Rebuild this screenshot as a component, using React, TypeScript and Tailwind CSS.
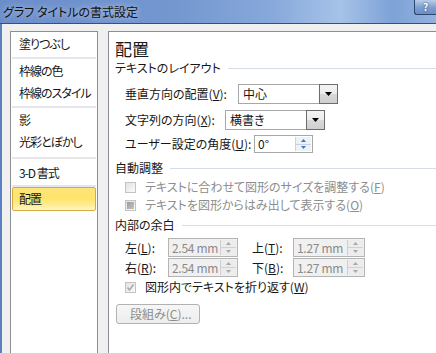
import React from "react";

const jp = "font-['Noto_Sans_CJK_JP','Noto_Sans_CJK_SC',sans-serif] [font-feature-settings:'palt']";

function U({ children }: { children: React.ReactNode }) {
  return <span className="underline decoration-1 underline-offset-[1px]">{children}</span>;
}

function Section({ title, className }: { title: string; className: string }) {
  return (
    <div className={`flex h-4 items-center ${className}`}>
      <span className="whitespace-nowrap leading-4">{title}</span>
      <div className="ml-[7px] h-px flex-1 bg-[#d6dde6]" />
    </div>
  );
}

function Arrow() {
  return (
    <svg width="7" height="4" viewBox="0 0 7 4">
      <polygon points="0,0 7,0 3.5,4" fill="#000" />
    </svg>
  );
}

function Combo({ value }: { value: string }) {
  return (
    <div className="flex h-5 w-[100px] border border-[#a7a7a7] bg-white">
      <div className="flex-1 pl-[4px] leading-[18px]">{value}</div>
      <div className="-my-px -mr-px flex h-5 w-[19px] items-center justify-center border border-[#6c6c6c] bg-[linear-gradient(#f4f4f4_0%,#ebebeb_50%,#d9d9d9_51%,#cfcfcf_100%)]">
        <Arrow />
      </div>
    </div>
  );
}

function SpinArrows({ disabled }: { disabled?: boolean }) {
  const fill = disabled ? "#a8a8a8" : "#3f78c2";
  return (
    <div
      className={`flex w-4 flex-col border-l ${
        disabled ? "border-[#cfcfcf] bg-[#ececec]" : "border-[#c9d4e2] bg-[#eef2f7]"
      }`}
    >
      <div className={`flex flex-1 items-center justify-center border-b ${disabled ? "border-[#d2d2d2]" : "border-[#c7d3e3]"}`}>
        <svg width="5" height="3" viewBox="0 0 5 3">
          <polygon points="0,3 5,3 2.5,0" fill={fill} />
        </svg>
      </div>
      <div className="flex flex-1 items-center justify-center">
        <svg width="5" height="3" viewBox="0 0 5 3">
          <polygon points="0,0 5,0 2.5,3" fill={fill} />
        </svg>
      </div>
    </div>
  );
}

function DisabledSpin({ value, className }: { value: string; className: string }) {
  return (
    <div className={`flex h-[19px] border border-[#b4b4b4] bg-[#f0f0f0] text-[#8a8a8a] ${className}`}>
      <div className="flex-1 pl-[3px] leading-[17px] tracking-[-0.3px] whitespace-nowrap">{value}</div>
      <div className="flex py-px pr-px">
        <SpinArrows disabled />
      </div>
    </div>
  );
}

function Check({ state }: { state: "none" | "fill" | "check" }) {
  return (
    <div className="flex h-[11px] w-[11px] items-center justify-center border border-[#c3c3c3] bg-[linear-gradient(135deg,#e2e2e2,#fbfbfb)]">
      {state === "fill" && <div className="h-[7px] w-[7px] bg-[linear-gradient(135deg,#9c9c9c,#c4c4c4)]" />}
      {state === "check" && (
        <svg width="9" height="9" viewBox="0 0 9 9">
          <path d="M1.5 4.5 L3.5 7 L7.5 1.5" stroke="#a9a9a9" strokeWidth="1.6" fill="none" />
        </svg>
      )}
    </div>
  );
}

function ListItem({ label, className }: { label: string; className?: string }) {
  return <div className={`flex h-[22px] items-center pl-[8px] whitespace-nowrap ${className ?? ""}`}>{label}</div>;
}

function Sep({ className }: { className: string }) {
  return (
    <div className={`flex flex-col justify-center ${className}`}>
      <div className="mx-px h-[2px] bg-[#e6e6ea]" />
    </div>
  );
}

export default function App() {
  return (
    <div className={`flex h-[353px] w-[436px] flex-col overflow-hidden bg-[#f0f0f0] text-[12px] text-[#161616] ${jp}`}>
      {/* title bar */}
      <div className="flex h-[24px] shrink-0 items-start justify-between border-b border-[#34507c] bg-[linear-gradient(90deg,#6b8ecb_0%,#7497d0_40%,#86a8da_62%,#a6c2e8_78%,#7ea2d7_90%,#92b2df_100%)]">
        <div className="pl-[3px] pt-[4px] leading-[15px] text-[#111] [text-shadow:0_0_6px_rgba(255,255,255,0.7)] whitespace-nowrap">
          グラフ タイトルの書式設定
        </div>
        <div className="flex h-[15px] w-[22px] justify-center rounded-bl-[3px] border-b border-l border-[#2c4770] bg-[linear-gradient(#b8cdea,#7d9ed0_55%,#6a8ec6)] pt-[1px] text-[10px] font-bold leading-[12px] text-white [text-shadow:0_0_2px_#1d3559]">
          ?
        </div>
      </div>

      {/* body */}
      <div className="flex flex-1 border-l-2 border-[#5b80c0] pl-[8px] pt-[7px]">
        {/* category list */}
        <div className="h-[340px] w-[88px] shrink-0 border border-[#8a8f97] bg-white tracking-[-1px]">
          <div className="pt-[1px]">
            <ListItem label="塗りつぶし" />
            <Sep className="h-[5px]" />
            <ListItem label="枠線の色" />
            <ListItem label="枠線のスタイル" />
            <Sep className="h-[5px]" />
            <ListItem label="影" />
            <ListItem label="光彩とぼかし" />
            <Sep className="h-[9px]" />
            <ListItem label="3-D 書式" />
            <Sep className="h-[3px]" />
            <div className="mx-px flex h-[24px] items-center rounded-[2px] border border-[#d7ab43] bg-[linear-gradient(#fde47c_0%,#ffe46a_45%,#ffeb90_75%,#fff6c9_100%)] pl-[6px]">
              配置
            </div>
          </div>
        </div>

        {/* content panel */}
        <div className="ml-[10px] h-[340px] w-[340px] shrink-0 border border-[#8a8f97] bg-white">
          <div className="flex flex-col pl-[6px]">
            <div className="mt-[6px] h-[22px] text-[17px] leading-[22px] text-[#1a1a1a]">配置</div>
            <Section title="テキストのレイアウト" className="mt-0" />

            <div className="mt-[8px] flex h-5 items-center pl-[10px]">
              <div className="w-[113px] whitespace-nowrap">
                垂直方向の配置(<U>V</U>):
              </div>
              <Combo value="中心" />
            </div>
            <div className="mt-[6px] flex h-5 items-center pl-[10px]">
              <div className="w-[100px] whitespace-nowrap">
                文字列の方向(<U>X</U>):
              </div>
              <Combo value="横書き" />
            </div>
            <div className="mt-[5px] flex h-[18px] items-center pl-[10px]">
              <div className="w-[129px] whitespace-nowrap">
                ユーザー設定の角度(<U>U</U>):
              </div>
              <div className="flex h-[18px] w-[59px] border border-[#a7a7a7] bg-white">
                <div className="flex-1 pl-[3px] leading-[16px]">0°</div>
                <div className="flex py-px pr-px">
                  <SpinArrows />
                </div>
              </div>
            </div>

            <Section title="自動調整" className="mt-[7px]" />
            <div className="mt-[3px] flex h-4 items-center pl-[10px] text-[#8d8d8d]">
              <Check state="none" />
              <span className="ml-[9px] whitespace-nowrap">
                テキストに合わせて図形のサイズを調整する(<U>F</U>)
              </span>
            </div>
            <div className="mt-[2px] flex h-4 items-center pl-[10px] text-[#8d8d8d]">
              <Check state="fill" />
              <span className="ml-[9px] whitespace-nowrap">
                テキストを図形からはみ出して表示する(<U>O</U>)
              </span>
            </div>

            <Section title="内部の余白" className="mt-[4px]" />
            <div className="mt-[5px] flex h-[19px] items-center pl-[10px]">
              <div className="w-[43px] whitespace-nowrap">
                左(<U>L</U>):
              </div>
              <DisabledSpin value="2.54 mm" className="w-[70px]" />
              <div className="ml-[14px] w-[41px] whitespace-nowrap">
                上(<U>T</U>):
              </div>
              <DisabledSpin value="1.27 mm" className="w-[72px]" />
            </div>
            <div className="mt-[1px] flex h-[19px] items-center pl-[10px]">
              <div className="w-[43px] whitespace-nowrap">
                右(<U>R</U>):
              </div>
              <DisabledSpin value="2.54 mm" className="w-[70px]" />
              <div className="ml-[14px] w-[41px] whitespace-nowrap">
                下(<U>B</U>):
              </div>
              <DisabledSpin value="1.27 mm" className="w-[72px]" />
            </div>
            <div className="mt-[2px] flex h-4 items-center pl-[10px]">
              <Check state="check" />
              <span className="ml-[9px] whitespace-nowrap">
                図形内でテキストを折り返す(<U>W</U>)
              </span>
            </div>

            <div className="ml-px mt-[9px] h-5 w-[84px] rounded-[3px] border border-[#b2b2b2] bg-[linear-gradient(#f6f6f6,#ededed)] pl-[13px] leading-[18px] text-[#8d8d8d] whitespace-nowrap">
              段組み(<U>C</U>)...
            </div>
          </div>
        </div>
      </div>
    </div>
  );
}
